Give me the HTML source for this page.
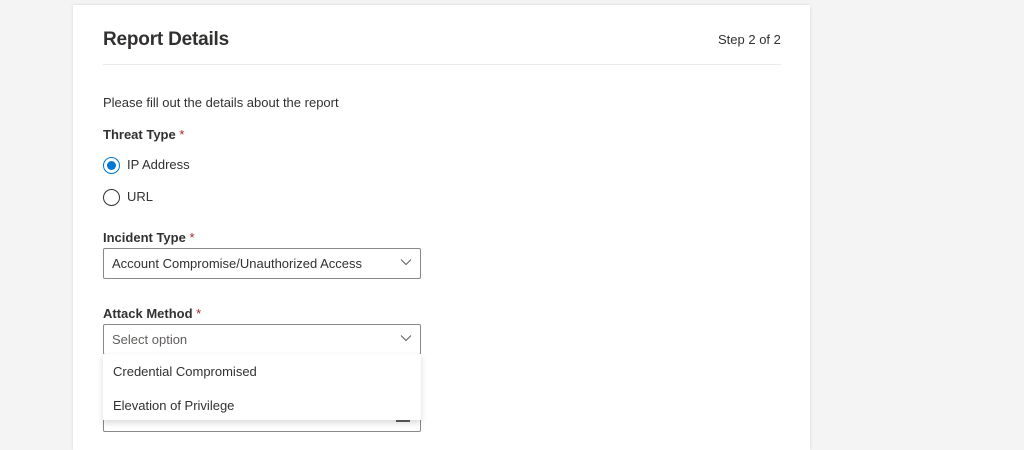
<!DOCTYPE html>
<html style="height:450px;overflow:hidden"><head><style>
body{margin:0;width:1024px;height:450px;background:#f4f4f4;font-family:"Liberation Sans",sans-serif;overflow:hidden;position:relative;color:#323130}
.card{position:absolute;left:73px;top:5px;width:737px;height:445px;background:#fff;box-shadow:0 0 3px rgba(0,0,0,.12)}
.a{position:absolute;white-space:nowrap}
.lbl{font-size:13px;font-weight:bold;color:#323130}
.lbl span{color:#a4262c;font-weight:normal}
.t{font-size:13px;color:#323130}
.box{position:absolute;left:103px;width:316px;height:29px;border:1px solid #8a8886;border-radius:2px;background:#fff}
.box .v{position:absolute;left:8px;top:7px;font-size:13px}
.chev{position:absolute;right:8px;top:9px}
.radio{position:absolute;left:103px;width:17px;height:17px;border:1px solid #323130;border-radius:50%;box-sizing:border-box}
</style></head><body>
<div class="card"></div>
<div class="a" style="left:103px;top:29px;font-size:19px;font-weight:bold;color:#323130;letter-spacing:-0.2px">Report Details</div>
<div class="a t" style="left:718px;top:32px">Step 2 of 2</div>
<div class="a" style="left:103px;top:64px;width:678px;height:1px;background:#edebe9"></div>
<div class="a t" style="left:103px;top:95px">Please fill out the details about the report</div>
<div class="a lbl" style="left:103px;top:127px">Threat Type <span>*</span></div>
<div class="radio" style="top:157px;border-color:#0078d4"><div style="position:absolute;left:3px;top:3px;width:9px;height:9px;border-radius:50%;background:#0078d4"></div></div>
<div class="a t" style="left:127px;top:157px">IP Address</div>
<div class="radio" style="top:189px"></div>
<div class="a t" style="left:127px;top:189px">URL</div>
<div class="a lbl" style="left:103px;top:230px">Incident Type <span>*</span></div>
<div class="box" style="top:248px"><div class="v">Account Compromise/Unauthorized Access</div>
<svg class="chev" width="12" height="8" viewBox="0 0 12 8"><path d="M1 1.5L6 6.5L11 1.5" fill="none" stroke="#605e5c" stroke-width="1"/></svg></div>
<div class="a lbl" style="left:103px;top:306px">Attack Method <span>*</span></div>
<div class="box" style="top:400px;height:30px"><div style="position:absolute;right:10px;top:19px;width:14px;height:2px;background:#605e5c"></div></div>
<div class="box" style="top:324px"><div class="v" style="color:#605e5c">Select option</div>
<svg class="chev" width="12" height="8" viewBox="0 0 12 8"><path d="M1 1.5L6 6.5L11 1.5" fill="none" stroke="#605e5c" stroke-width="1"/></svg></div>
<div class="a" style="left:103px;top:354px;width:318px;height:66px;background:#fff;box-shadow:0 3px 6px rgba(0,0,0,.15)"></div>
<div class="a t" style="left:113px;top:364px">Credential Compromised</div>
<div class="a t" style="left:113px;top:398px">Elevation of Privilege</div>
</body></html>
